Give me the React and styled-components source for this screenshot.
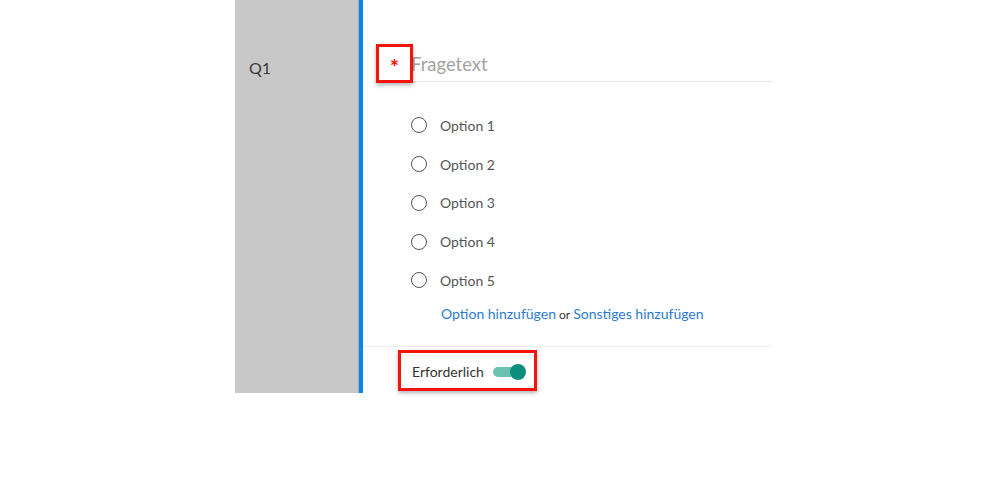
import styled, { createGlobalStyle } from 'styled-components';

const GlobalStyle = createGlobalStyle`
	body {
		margin: 0;
		background: #fff;
		font-family: Lato, "Open Sans", sans-serif;
	}
`;

const Page = styled.div`
	display: flex;
	padding-left: 235px;
	height: 500px;
	box-sizing: border-box;
`;

const Card = styled.div`
	display: flex;
	height: 393px;
`;

const Sidebar = styled.div`
	width: 124px;
	background: #c8c8c8;
	border-right: 1px solid #aeaeae;
	padding: 58px 0 0 14px;
	box-sizing: border-box;
	font-size: 16px;
	color: #3a3a3a;
`;

const Accent = styled.div`
	width: 4px;
	background: #0c86e6;
`;

const Main = styled.div`
	width: 409px;
	display: flex;
	flex-direction: column;
`;

const TitleRow = styled.div`
	display: flex;
	align-items: flex-end;
	margin: 44px 0 0 13px;
`;

const Highlight = styled.div`
	position: relative;
	z-index: 1;
	display: flex;
	align-items: center;
	box-sizing: border-box;
	border: 3px solid #f3140c;
	box-shadow: 0 2px 4px rgba(0, 0, 0, 0.3);
	background: #fff;
	width: ${(p) => p.width}px;
	height: ${(p) => p.height}px;
	padding-left: ${(p) => p.pad || 0}px;
	padding-top: ${(p) => p.padTop || 0}px;
	justify-content: ${(p) => (p.center ? 'center' : 'flex-start')};
`;

const Asterisk = styled.span`
	color: #f3140c;
	font-size: 21px;
	font-weight: 900;
	line-height: 1;
	margin-top: 6px;
`;

const TitleField = styled.div`
	flex: 1;
	margin: 0 0 1px -2px;
	padding-bottom: 6px;
	border-bottom: 1px solid #e6e6e6;
	font-size: 18.5px;
	color: #a3a3a3;
`;

const Options = styled.ul`
	list-style: none;
	margin: 23px 0 0 48px;
	padding: 0;
`;

const OptionRow = styled.li`
	display: flex;
	align-items: center;
	height: 38.75px;
	font-size: 14px;
	color: #555;
`;

const Radio = styled.span`
	width: 14px;
	height: 14px;
	border: 1.5px solid #555;
	border-radius: 50%;
	margin-right: 13px;
`;

const AddRow = styled.div`
	margin: 4px 0 0 78px;
	font-size: 14px;
	color: #333;
	height: 20px;
	line-height: 20px;
`;

const Link = styled.a`
	color: #2b7bd6;
	cursor: pointer;
`;

const Or = styled.span`
	font-size: 12px;
	margin: 0 3px;
`;

const Footer = styled.div`
	margin-top: 22px;
	border-top: 1px solid #efefef;
	padding: 3px 0 0 35px;
`;

const Label = styled.span`
	font-size: 14px;
	color: #333;
	margin-right: 9px;
`;

const Track = styled.span`
	position: relative;
	width: 30px;
	height: 10px;
	border-radius: 5px;
	background: #6cc0ae;
`;

const Knob = styled.span`
	position: absolute;
	right: -3px;
	top: -3px;
	width: 16px;
	height: 16px;
	border-radius: 50%;
	background: #0b8f7c;
`;

const options = ['Option 1', 'Option 2', 'Option 3', 'Option 4', 'Option 5'];

const App = () => (
	<>
		<GlobalStyle />
		<Page>
			<Card>
				<Sidebar>Q1</Sidebar>
				<Accent />
				<Main>
					<TitleRow>
						<Highlight width={37} height={39} center>
							<Asterisk>*</Asterisk>
						</Highlight>
						<TitleField>Fragetext</TitleField>
					</TitleRow>
					<Options>
						{options.map((o) => (
							<OptionRow key={o}>
								<Radio />
								{o}
							</OptionRow>
						))}
					</Options>
					<AddRow>
						<Link>Option hinzufügen</Link>
						<Or>or</Or>
						<Link>Sonstiges hinzufügen</Link>
					</AddRow>
					<Footer>
						<Highlight width={139} height={41} pad={11} padTop={3}>
							<Label>Erforderlich</Label>
							<Track>
								<Knob />
							</Track>
						</Highlight>
					</Footer>
				</Main>
			</Card>
		</Page>
	</>
);

export default App;
